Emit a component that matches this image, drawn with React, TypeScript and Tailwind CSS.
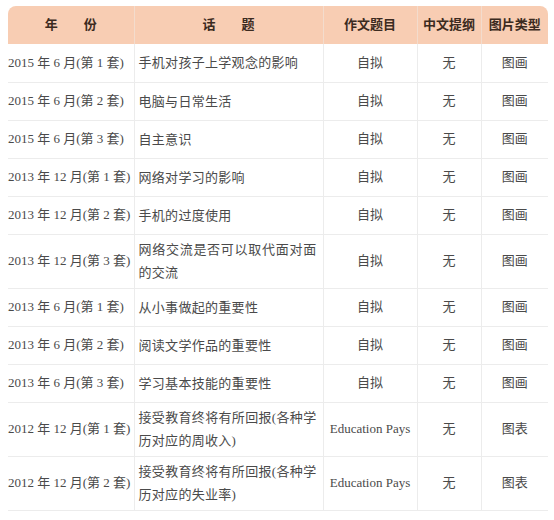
const rows: { year: string; topic: string; title: string; outline: string; kind: string; tall?: boolean }[] = [
  { year: '2015 年 6 月(第 1 套)', topic: '手机对孩子上学观念的影响', title: '自拟', outline: '无', kind: '图画' },
  { year: '2015 年 6 月(第 2 套)', topic: '电脑与日常生活', title: '自拟', outline: '无', kind: '图画' },
  { year: '2015 年 6 月(第 3 套)', topic: '自主意识', title: '自拟', outline: '无', kind: '图画' },
  { year: '2013 年 12 月(第 1 套)', topic: '网络对学习的影响', title: '自拟', outline: '无', kind: '图画' },
  { year: '2013 年 12 月(第 2 套)', topic: '手机的过度使用', title: '自拟', outline: '无', kind: '图画' },
  { year: '2013 年 12 月(第 3 套)', topic: '网络交流是否可以取代面对面的交流', title: '自拟', outline: '无', kind: '图画', tall: true },
  { year: '2013 年 6 月(第 1 套)', topic: '从小事做起的重要性', title: '自拟', outline: '无', kind: '图画' },
  { year: '2013 年 6 月(第 2 套)', topic: '阅读文学作品的重要性', title: '自拟', outline: '无', kind: '图画' },
  { year: '2013 年 6 月(第 3 套)', topic: '学习基本技能的重要性', title: '自拟', outline: '无', kind: '图画' },
  { year: '2012 年 12 月(第 1 套)', topic: '接受教育终将有所回报(各种学历对应的周收入)', title: 'Education Pays', outline: '无', kind: '图表', tall: true },
  { year: '2012 年 12 月(第 2 套)', topic: '接受教育终将有所回报(各种学历对应的失业率)', title: 'Education Pays', outline: '无', kind: '图表', tall: true },
];

export default function App() {
  return (
    <div
      className="w-[554px] h-[520px] bg-white pt-[6px] px-[8px]"
      style={{ fontFamily: '"Liberation Serif", "Noto Sans CJK SC", serif' }}
    >
      <table className="w-[540px] table-fixed border-collapse text-[13px] text-[#4a4a4a]">
        <colgroup>
          <col className="w-[126px]" />
          <col className="w-[189px]" />
          <col className="w-[94px]" />
          <col className="w-[64px]" />
          <col className="w-[67px]" />
        </colgroup>
        <thead>
          <tr className="h-[38px] bg-[#f8cdb3] text-[#3b2a20] font-bold">
            <th className="rounded-tl-[8px] border-r border-[#f3dccd]">
              <span className="tracking-[0px]">年</span>
              <span className="inline-block w-[26px]" />
              <span>份</span>
            </th>
            <th className="border-r border-[#f3dccd]">
              <span>话</span>
              <span className="inline-block w-[26px]" />
              <span>题</span>
            </th>
            <th className="border-r border-[#f3dccd] font-bold">作文题目</th>
            <th className="border-r border-[#f3dccd]">中文提纲</th>
            <th className="rounded-tr-[8px]">图片类型</th>
          </tr>
        </thead>
        <tbody>
          {rows.map((r, i) => (
            <tr key={i} className={`${r.tall ? 'h-[54px]' : 'h-[38px]'} border-b border-[#ececec]`}>
              <td className="pl-0 pr-[2px] whitespace-nowrap border-r border-[#ececec]">{r.year}</td>
              <td className="pl-[4px] pr-[6px] leading-[23px] text-justify tracking-[0.3px] border-r border-[#ececec]">
                {r.topic}
              </td>
              <td className="text-center whitespace-nowrap border-r border-[#ececec]">{r.title}</td>
              <td className="text-center border-r border-[#ececec]">{r.outline}</td>
              <td className="text-center">{r.kind}</td>
            </tr>
          ))}
        </tbody>
      </table>
    </div>
  );
}
